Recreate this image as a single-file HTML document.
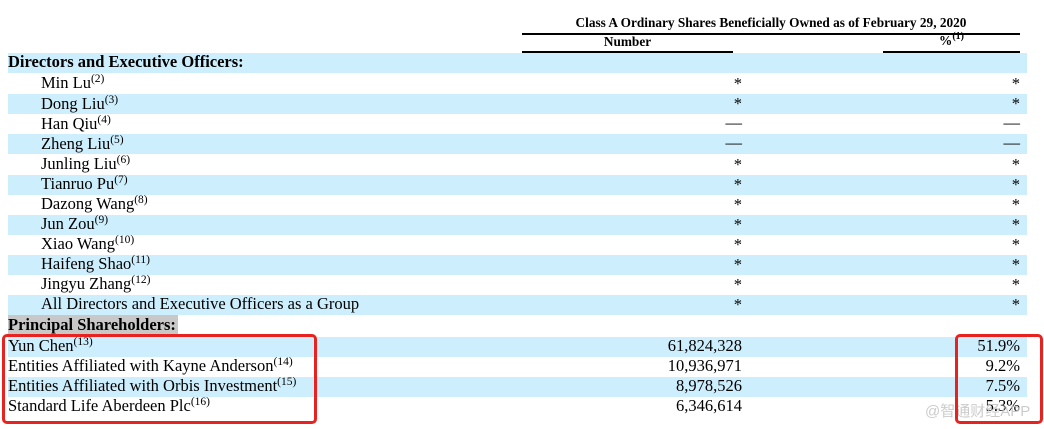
<!DOCTYPE html>
<html><head><meta charset="utf-8"><style>
body{margin:0;width:1044px;height:429px;background:#fff;position:relative;overflow:hidden;font-family:"Liberation Serif",serif;font-size:16.5px;color:#000}
.a{position:absolute;white-space:nowrap}
.r{position:absolute;left:8px;width:1019px;height:20px;background:#cdeefc}
.t{position:absolute;line-height:20px;white-space:nowrap}
sup{font-size:11.5px;vertical-align:6px;line-height:0}
.n{position:absolute;right:302px;line-height:20px;text-align:right}
.p{position:absolute;right:24px;line-height:20px;text-align:right}
.box{position:absolute;border:3px solid #e8231f;border-radius:5px}
</style></head><body>
<div class="a" style="left:522px;top:15px;width:498px;text-align:center;font-weight:bold;font-size:13.3px">Class A Ordinary Shares Beneficially Owned as of February 29, 2020</div>
<div class="a" style="left:522px;top:33px;width:498px;height:2px;background:#000"></div>
<div class="a" style="left:522px;top:34px;width:211px;text-align:center;font-weight:bold;font-size:13.3px">Number</div>
<div class="a" style="left:883px;top:33px;width:137px;text-align:center;font-weight:bold;font-size:13.3px">%<sup style="font-size:10px">(1)</sup></div>
<div class="a" style="left:522px;top:51px;width:211px;height:2px;background:#000"></div>
<div class="a" style="left:883px;top:51px;width:137px;height:2px;background:#000"></div>

<div class="r" style="top:53px"></div>
<div class="r" style="top:94px"></div>
<div class="r" style="top:134px"></div>
<div class="r" style="top:175px"></div>
<div class="r" style="top:215px"></div>
<div class="r" style="top:255px"></div>
<div class="r" style="top:295px"></div>
<div class="r" style="top:337px"></div>
<div class="r" style="top:377px"></div>

<div class="t" style="left:8px;top:52px;font-weight:bold">Directors and Executive Officers:</div>
<div style="position:absolute;left:0;top:73px;width:1044px">
<div class="t" style="left:41px;top:0">Min Lu<sup>(2)</sup></div><div class="n" style="top:1px">*</div><div class="p" style="top:1px">*</div>
<div class="t" style="left:41px;top:21px">Dong Liu<sup>(3)</sup></div><div class="n" style="top:21px">*</div><div class="p" style="top:21px">*</div>
<div class="t" style="left:41px;top:41px">Han Qiu<sup>(4)</sup></div><div class="n" style="top:40px">—</div><div class="p" style="top:40px">—</div>
<div class="t" style="left:41px;top:61px">Zheng Liu<sup>(5)</sup></div><div class="n" style="top:60px">—</div><div class="p" style="top:60px">—</div>
<div class="t" style="left:41px;top:81px">Junling Liu<sup>(6)</sup></div><div class="n" style="top:82px">*</div><div class="p" style="top:82px">*</div>
<div class="t" style="left:41px;top:101px">Tianruo Pu<sup>(7)</sup></div><div class="n" style="top:102px">*</div><div class="p" style="top:102px">*</div>
<div class="t" style="left:41px;top:121px">Dazong Wang<sup>(8)</sup></div><div class="n" style="top:122px">*</div><div class="p" style="top:122px">*</div>
<div class="t" style="left:41px;top:141px">Jun Zou<sup>(9)</sup></div><div class="n" style="top:142px">*</div><div class="p" style="top:142px">*</div>
<div class="t" style="left:41px;top:161px">Xiao Wang<sup>(10)</sup></div><div class="n" style="top:162px">*</div><div class="p" style="top:162px">*</div>
<div class="t" style="left:41px;top:181px">Haifeng Shao<sup>(11)</sup></div><div class="n" style="top:182px">*</div><div class="p" style="top:182px">*</div>
<div class="t" style="left:41px;top:201px">Jingyu Zhang<sup>(12)</sup></div><div class="n" style="top:202px">*</div><div class="p" style="top:202px">*</div>
<div class="t" style="left:41px;top:221px">All Directors and Executive Officers as a Group</div><div class="n" style="top:222px">*</div><div class="p" style="top:222px">*</div>
</div>
<div class="t" style="left:8px;top:315px;height:20px;background:#c8c8c8;padding-right:2px;font-weight:bold">Principal Shareholders:</div>
<div class="t" style="left:8px;top:336px">Yun Chen<sup>(13)</sup></div><div class="n" style="top:336px">61,824,328</div><div class="p" style="top:336px">51.9%</div>
<div class="t" style="left:8px;top:356px">Entities Affiliated with Kayne Anderson<sup>(14)</sup></div><div class="n" style="top:356px">10,936,971</div><div class="p" style="top:356px">9.2%</div>
<div class="t" style="left:8px;top:376px">Entities Affiliated with Orbis Investment<sup>(15)</sup></div><div class="n" style="top:376px">8,978,526</div><div class="p" style="top:376px">7.5%</div>
<div class="t" style="left:8px;top:396px">Standard Life Aberdeen Plc<sup>(16)</sup></div><div class="n" style="top:396px">6,346,614</div><div class="p" style="top:396px">5.3%</div>
<div class="a" style="left:925px;top:400px;font-family:'Liberation Sans','Noto Sans CJK SC',sans-serif;font-size:15px;color:rgba(190,190,190,0.8)">@智通财经APP</div>
<div class="box" style="left:2px;top:334px;width:309px;height:84px"></div>
<div class="box" style="left:955px;top:334px;width:82px;height:84px"></div>
</body></html>
